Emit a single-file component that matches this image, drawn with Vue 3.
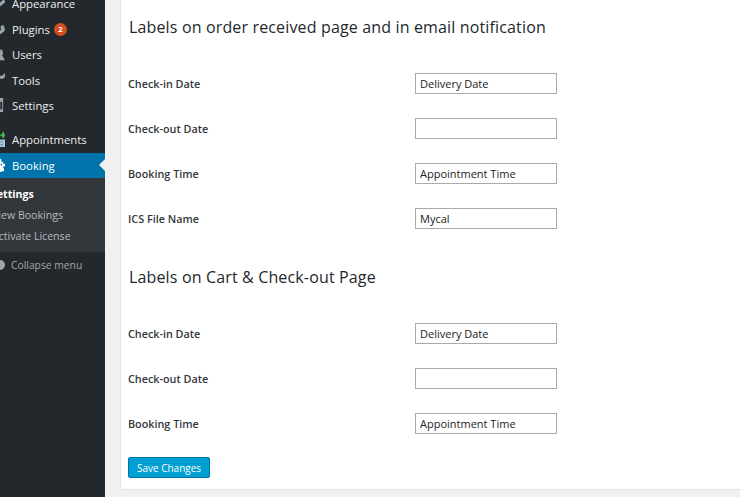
<template>
  <div class="page">
    <aside class="sidebar">
      <ul class="menu">
        <li v-for="item in topItems" :key="item.label" class="menu-item">
          <svg class="icon" viewBox="0 0 16 16" v-html="item.icon"></svg>
          <span>{{ item.label }}</span>
          <span v-if="item.badge" class="badge">{{ item.badge }}</span>
        </li>
        <li class="menu-item gap-item">
          <svg class="icon" viewBox="0 0 16 16">
            <path d="M13 0h2v2.500h1.500v2H15v2h-2v-2h-2v-2h2z" fill="#46b450" />
            <path d="M2 8h14v8H2z" fill="#a9c6d8" />
            <path d="M11 10h3v1h-3zM11 13h3v1h-3z" fill="#5b7f96" />
          </svg>
          <span>Appointments</span>
        </li>
        <li class="menu-item current">
          <svg class="icon" viewBox="0 0 16 16">
            <path d="M2 1h10v3h2v2h2v3h-2v2h1v3h-3v1H2z" fill="#fff" />
            <path d="M11.500 6h1.500v2h-1.500z" fill="#0073aa" />
          </svg>
          <span>Booking</span>
          <i class="arrow"></i>
        </li>
      </ul>
      <ul class="submenu">
        <li class="sub-current">Settings</li>
        <li>View Bookings</li>
        <li>Activate License</li>
      </ul>
      <div class="collapse">
        <i class="collapse-dot"></i>
        <span>Collapse menu</span>
      </div>
    </aside>

    <main class="content">
      <section class="card">
        <template v-for="group in groups" :key="group.title">
          <h3>{{ group.title }}</h3>
          <div v-for="row in group.rows" :key="row.label" class="row">
            <label>{{ row.label }}</label>
            <input type="text" :value="row.value" />
          </div>
        </template>
        <button class="save">Save Changes</button>
      </section>
    </main>
  </div>
</template>

<script setup>
const topItems = [
  { label: 'Appearance', icon: '<path d="M7 10l7-6 2 1v2l-5 4z" fill="#9ea3a8"/>' },
  { label: 'Plugins', badge: 2, icon: '<path d="M6 14l6-6-1-3 3-2 1 2 1 3-1 2-4 3z" fill="#9ea3a8"/>' },
  { label: 'Users', icon: '<path d="M10 3h3l1 4-1 2 3 5H8z" fill="#9ea3a8"/>' },
  { label: 'Tools', icon: '<path d="M8 3h5l3-3v4l-2 2H8z" fill="#9ea3a8"/>' },
  { label: 'Settings', icon: '<path d="M2 0h12v15H2z" fill="#9ea3a8"/><path d="M11 4h2v8h-2z" fill="#23282d"/>' },
]

const groups = [
  {
    title: 'Labels on order received page and in email notification',
    rows: [
      { label: 'Check-in Date', value: 'Delivery Date' },
      { label: 'Check-out Date', value: '' },
      { label: 'Booking Time', value: 'Appointment Time' },
      { label: 'ICS File Name', value: 'Mycal' },
    ],
  },
  {
    title: 'Labels on Cart & Check-out Page',
    rows: [
      { label: 'Check-in Date', value: 'Delivery Date' },
      { label: 'Check-out Date', value: '' },
      { label: 'Booking Time', value: 'Appointment Time' },
    ],
  },
]
</script>

<style>
html,
body {
  margin: 0;
  overflow: hidden;
  background: #f1f1f1;
}
</style>

<style scoped>
.page {
  display: flex;
  width: 740px;
  height: 497px;
  overflow: hidden;
  font-family: "Open Sans", sans-serif;
  font-size: 11px;
  background: #f1f1f1;
}

.sidebar {
  width: 105px;
  flex-shrink: 0;
  background: #23282d;
  color: #eee;
  overflow: hidden;
}

ul {
  list-style: none;
  margin: 0;
  padding: 0;
}

.menu {
  margin-top: -9px;
}

.menu-item {
  position: relative;
  display: flex;
  align-items: center;
  height: 25.5px;
  padding-left: 12px;
  font-size: 11.3px;
}

.icon {
  position: absolute;
  left: -10px;
  top: 5px;
  width: 15px;
  height: 15px;
}

.badge {
  width: 13px;
  height: 13px;
  margin-left: 4px;
  border-radius: 50%;
  background: #d54e21;
  color: #fff;
  font-size: 7.5px;
  font-weight: 700;
  line-height: 13px;
  text-align: center;
}

.gap-item {
  margin-top: 8px;
}

.current {
  height: 25px;
  margin-top: 1px;
  background: #0073aa;
  color: #fff;
}

.arrow {
  position: absolute;
  right: 0;
  top: 6px;
  border: 6px solid transparent;
  border-right-color: #f1f1f1;
  border-left-width: 0;
}

.submenu {
  height: 74px;
  padding-top: 6px;
  box-sizing: border-box;
  background: #32373c;
  color: #b4b9be;
  font-size: 10.6px;
}

.submenu li {
  height: 21px;
  line-height: 21px;
  margin-left: -8px;
}

.submenu .sub-current {
  margin-left: -9px;
  color: #fff;
  font-weight: 700;
}

.collapse {
  display: flex;
  align-items: center;
  gap: 6px;
  height: 26px;
  color: #a0a5aa;
  font-size: 10.3px;
}

.collapse-dot {
  width: 10px;
  height: 10px;
  margin-left: -5px;
  border-radius: 50%;
  background: #a0a5aa;
}

.content {
  flex: 1;
  padding-left: 15px;
  min-width: 0;
}

.card {
  height: 490px;
  box-sizing: border-box;
  padding-left: 7px;
  background: #fff;
  border-left: 1px solid #e5e5e5;
  border-bottom: 1px solid #e5e5e5;
  overflow: hidden;
}

h3 {
  margin: 0;
  padding-left: 1px;
  height: 21px;
  color: #23282d;
  font-size: 16px;
  font-weight: 400;
  line-height: 21px;
  letter-spacing: 0.15px;
}

.card h3:first-child {
  margin-top: 17px;
  margin-bottom: 35px;
}

.card h3:not(:first-child) {
  margin-top: 38px;
  margin-bottom: 35px;
}

.row {
  display: flex;
  align-items: center;
  height: 21px;
  margin-bottom: 24px;
}

label {
  width: 287px;
  color: #32373c;
  font-size: 10.8px;
  font-weight: 600;
}

input {
  width: 142px;
  height: 21px;
  box-sizing: border-box;
  padding: 0 4px;
  border: 1px solid #aaa;
  background: #fff;
  color: #222;
  font-family: inherit;
  font-size: 11px;
  outline: none;
}

.save {
  display: block;
  width: 82px;
  height: 21px;
  margin-top: -1px;
  padding: 0;
  border: 1px solid #0073aa;
  border-radius: 2px;
  background: #00a0d2;
  color: #fff;
  font-family: inherit;
  font-size: 10px;
}
</style>
